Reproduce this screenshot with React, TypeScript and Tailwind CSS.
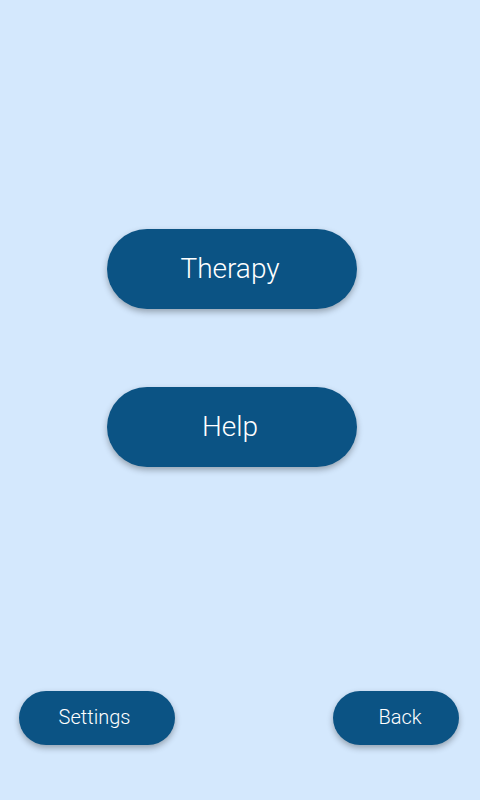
import React from "react";

export default function App() {
  const font = { fontFamily: "Roboto, 'Noto Sans', sans-serif" };
  return (
    <div
      className="w-[480px] h-[800px] bg-[#d4e8fd] flex flex-col font-light"
      style={font}
    >
      <div className="flex flex-col gap-[78px] pt-[229px] pl-[107px] flex-1">
        <button className="w-[250px] h-[80px] pr-[4px] rounded-full bg-[#0b5384] text-white text-[28px] font-light shadow-[0_3px_6px_rgba(0,0,0,0.3)]">
          Therapy
        </button>
        <button className="w-[250px] h-[80px] pr-[4px] rounded-full bg-[#0b5384] text-white text-[28px] font-light shadow-[0_3px_6px_rgba(0,0,0,0.3)]">
          Help
        </button>
      </div>
      <div className="flex justify-between pl-[19px] pr-[21px] pb-[55px]">
        <button className="w-[156px] h-[54px] pr-[5px] pb-[2px] rounded-full bg-[#0b5384] text-white text-[20px] font-light shadow-[0_3px_6px_rgba(0,0,0,0.3)]">
          Settings
        </button>
        <button className="w-[126px] h-[54px] pl-[8px] pb-[2px] rounded-full bg-[#0b5384] text-white text-[20px] font-light shadow-[0_3px_6px_rgba(0,0,0,0.3)]">
          Back
        </button>
      </div>
    </div>
  );
}
